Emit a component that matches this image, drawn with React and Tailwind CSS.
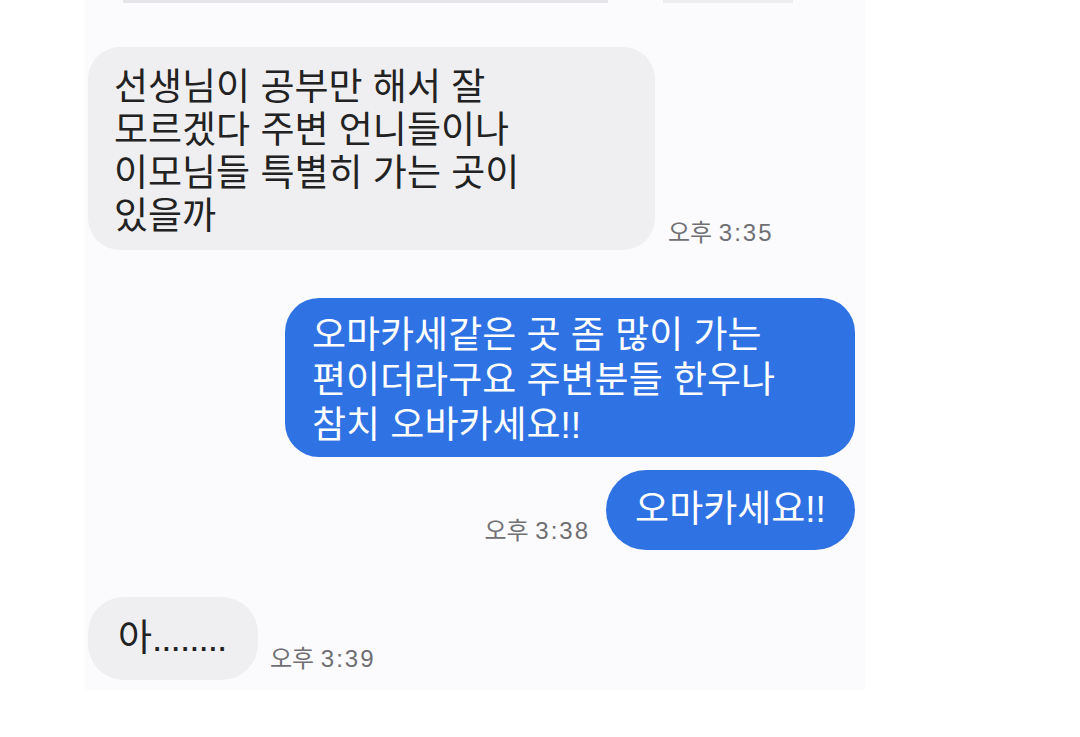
export default function App() {
  const font = { fontFamily: '"Liberation Sans", "Noto Sans CJK KR", sans-serif' };
  const Line = ({ children, h }) => (
    <div className={h === 45 ? "h-[45px] leading-[45px]" : "h-[43px] leading-[43px]"}>{children}</div>
  );
  return (
    <div className="w-[1080px] h-[737px] bg-white overflow-hidden" style={font}>
      <div className="ml-[85px] w-[780px] h-[690px] bg-[#fbfbfd] flex flex-col">
        <div className="flex h-[4px] gap-[55px] pl-[38px]">
          <div className="w-[485px] h-[3px] bg-[#e6e6ea]" />
          <div className="w-[130px] h-[3px] bg-[#ededf0]" />
        </div>
        <div className="mt-[43px] pl-[3px] flex items-end gap-[13px]">
          <div className="w-[567px] h-[203px] rounded-[32px] bg-[#efeff1] pl-[26px] pt-[19px] text-[37px] text-[#222]">
            <Line>선생님이 공부만 해서 잘</Line>
            <Line>모르겠다 주변 언니들이나</Line>
            <Line>이모님들 특별히 가는 곳이</Line>
            <Line>있을까</Line>
          </div>
          <div className="mb-[2px] text-[24px] leading-[30px] text-[#6f6f74]">
            오후 <span className="tracking-[2px]">3:35</span>
          </div>
        </div>
        <div className="mt-[48px] pr-[10px] flex justify-end">
          <div className="w-[570px] h-[159px] rounded-[34px] bg-[#2f72e4] pl-[27px] pt-[15px] text-[37px] text-white">
            <Line h={45}>오마카세같은 곳 좀 많이 가는</Line>
            <Line h={45}>편이더라구요 주변분들 한우나</Line>
            <Line h={45}>참치 오바카세요!!</Line>
          </div>
        </div>
        <div className="mt-[13px] pr-[10px] flex justify-end items-end gap-[16px]">
          <div className="mb-[4px] text-[24px] leading-[30px] text-[#6f6f74]">
            오후 <span className="tracking-[2px]">3:38</span>
          </div>
          <div className="w-[249px] h-[80px] rounded-[40px] bg-[#2f72e4] flex items-center justify-center text-[37px] text-white">
            오마카세요!!
          </div>
        </div>
        <div className="mt-[47px] pl-[3px] flex items-end gap-[12px]">
          <div className="w-[170px] h-[83px] rounded-[36px] bg-[#efeff1] pl-[30px] flex items-center text-[37px] text-[#222]">
            아<span className="tracking-[-1px]">........</span>
          </div>
          <div className="mb-[6px] text-[24px] leading-[30px] text-[#6f6f74]">
            오후 <span className="tracking-[2px]">3:39</span>
          </div>
        </div>
      </div>
    </div>
  );
}
